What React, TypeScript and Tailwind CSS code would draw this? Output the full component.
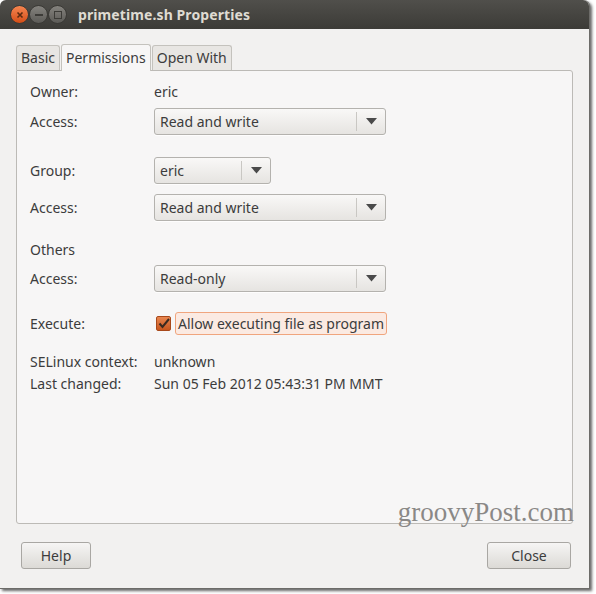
import React from "react";

const font = { fontFamily: '"Noto Sans", "DejaVu Sans", sans-serif' };

function Arrow() {
  return (
    <svg width="11" height="7" viewBox="0 0 11 7">
      <path d="M0 0 L11 0 L5.5 6.5 Z" fill="#4a4a4a" />
    </svg>
  );
}

function Combo({ text, w }: { text: string; w: string }) {
  return (
    <div
      className={`${w} h-[27px] flex items-center rounded-[3px] border border-[#b4b2ae] bg-gradient-to-b from-[#f9f8f7] to-[#e6e4e1] shadow-[0_1px_0_rgba(255,255,255,0.8)]`}
    >
      <span className="flex-1 pl-[5px] text-[14px] text-[#3c3c3c]">{text}</span>
      <div className="w-px h-[19px] bg-[#c9c7c3]" />
      <div className="w-[28px] flex items-center justify-center">
        <Arrow />
      </div>
    </div>
  );
}

function Label({ children }: { children: React.ReactNode }) {
  return <div className="w-[124px] text-[14px] text-[#3c3c3c]">{children}</div>;
}

export default function App() {
  return (
    <div className="w-[596px] h-[594px] bg-white relative overflow-hidden" style={font}>
      <div className="w-[590px] h-[589px] flex flex-col bg-[#f2f1f0] rounded-t-[6px] shadow-[2px_2px_3px_rgba(0,0,0,0.6)] border-r border-b border-[#6d6c69]">
        {/* title bar */}
        <div className="h-[29px] flex items-center bg-gradient-to-b from-[#504f4b] to-[#3c3b37] rounded-t-[6px] pl-[10px]">
          <div className="w-[19px] h-[19px] rounded-full bg-gradient-to-b from-[#f5854f] to-[#d34d14] flex items-center justify-center border border-[#3a3935]">
            <svg width="8" height="8" viewBox="0 0 8 8">
              <path d="M1.5 1.5 L6.5 6.5 M6.5 1.5 L1.5 6.5" stroke="#5a2a10" strokeWidth="1.6" />
            </svg>
          </div>
          <div className="w-[19px] h-[19px] rounded-full bg-gradient-to-b from-[#85837e] to-[#5c5b57] flex items-center justify-center border border-[#3a3935]">
            <div className="w-[8px] h-[2px] bg-[#3c3b37]" />
          </div>
          <div className="w-[19px] h-[19px] rounded-full bg-gradient-to-b from-[#85837e] to-[#5c5b57] flex items-center justify-center border border-[#3a3935]">
            <div className="w-[8px] h-[8px] border-[1.5px] border-[#3c3b37]" />
          </div>
          <div className="ml-[11px] text-[14px] font-bold text-[#dfdbd2] tracking-[0.1px]">
            primetime.sh Properties
          </div>
        </div>

        {/* body */}
        <div className="flex-1 flex flex-col px-[16px] pt-[14px]">
          {/* tabs */}
          <div className="flex items-end h-[27px] relative z-10">
            <div className="h-[25px] px-[4px] flex items-center text-[14px] text-[#3c3c3c] border border-[#c4c2bd] border-b-0 rounded-t-[3px] bg-[#e8e6e3] pb-[1px]">
              Basic
            </div>
            <div className="h-[27px] px-[4px] ml-px flex items-center text-[14px] text-[#3c3c3c] border border-[#c4c2bd] border-b-0 rounded-t-[3px] bg-[#f7f6f6] -mb-px pb-[2px]">
              Permissions
            </div>
            <div className="h-[25px] px-[4px] ml-[1px] flex items-center text-[14px] text-[#3c3c3c] border border-[#c4c2bd] border-b-0 rounded-t-[3px] bg-[#e8e6e3] pb-[1px]">
              Open With
            </div>
          </div>
          <div className="h-[454px] border border-[#bcbab6] rounded-b-[3px] rounded-tr-[3px] bg-[#f7f6f6] relative pl-[13px] pt-[12px]">
            <div className="flex items-center h-[17px]">
              <Label>Owner:</Label>
              <span className="text-[14px] text-[#3c3c3c]">eric</span>
            </div>
            <div className="flex items-center mt-[8px]">
              <Label>Access:</Label>
              <Combo text="Read and write" w="w-[232px]" />
            </div>
            <div className="flex items-center mt-[22px]">
              <Label>Group:</Label>
              <Combo text="eric" w="w-[117px]" />
            </div>
            <div className="flex items-center mt-[10px]">
              <Label>Access:</Label>
              <Combo text="Read and write" w="w-[232px]" />
            </div>
            <div className="mt-[18px] h-[20px] flex items-center text-[14px] text-[#3c3c3c]">Others</div>
            <div className="flex items-center mt-[6px]">
              <Label>Access:</Label>
              <Combo text="Read-only" w="w-[232px]" />
            </div>
            <div className="flex items-center mt-[20px]">
              <Label>Execute:</Label>
              <div className="ml-[2px] w-[15px] h-[15px] rounded-[2px] bg-gradient-to-b from-[#e8864f] to-[#c8561d] border border-[#a8481a] flex items-center justify-center">
                <svg width="12" height="11" viewBox="0 0 12 11">
                  <path d="M1.5 5.5 L4.5 9 L11 1" stroke="#3a2a20" strokeWidth="2" fill="none" />
                </svg>
              </div>
              <div className="ml-[4px] h-[23px] px-[2px] flex items-center rounded-[3px] border border-[#f0a57e] bg-[#fbeae2] text-[14px] text-[#3c3c3c]">
                Allow executing file as program
              </div>
            </div>
            <div className="flex items-center mt-[16px]">
              <Label>SELinux context:</Label>
              <span className="text-[14px] text-[#3c3c3c]">unknown</span>
            </div>
            <div className="flex items-center mt-[1px]">
              <Label>Last changed:</Label>
              <span className="text-[14px] text-[#3c3c3c]">Sun 05 Feb 2012 05:43:31 PM MMT</span>
            </div>
            <div
              className="absolute right-[-2px] bottom-[-3px] text-[27px] leading-none text-[#8a8886]"
              style={{ fontFamily: '"Liberation Serif", "DejaVu Serif", serif' }}
            >
              groovyPost.com
            </div>
          </div>

          {/* buttons */}
          <div className="flex justify-between mt-[18px] pl-[5px] pr-[2px]">
            <button className="w-[70px] h-[27px] rounded-[3px] border border-[#a9a7a3] bg-gradient-to-b from-[#f6f5f4] to-[#dcdad6] text-[14px] text-[#3c3c3c]">
              Help
            </button>
            <button className="w-[84px] h-[27px] rounded-[3px] border border-[#a9a7a3] bg-gradient-to-b from-[#f6f5f4] to-[#dcdad6] text-[14px] text-[#3c3c3c]">
              Close
            </button>
          </div>
        </div>
      </div>
    </div>
  );
}
